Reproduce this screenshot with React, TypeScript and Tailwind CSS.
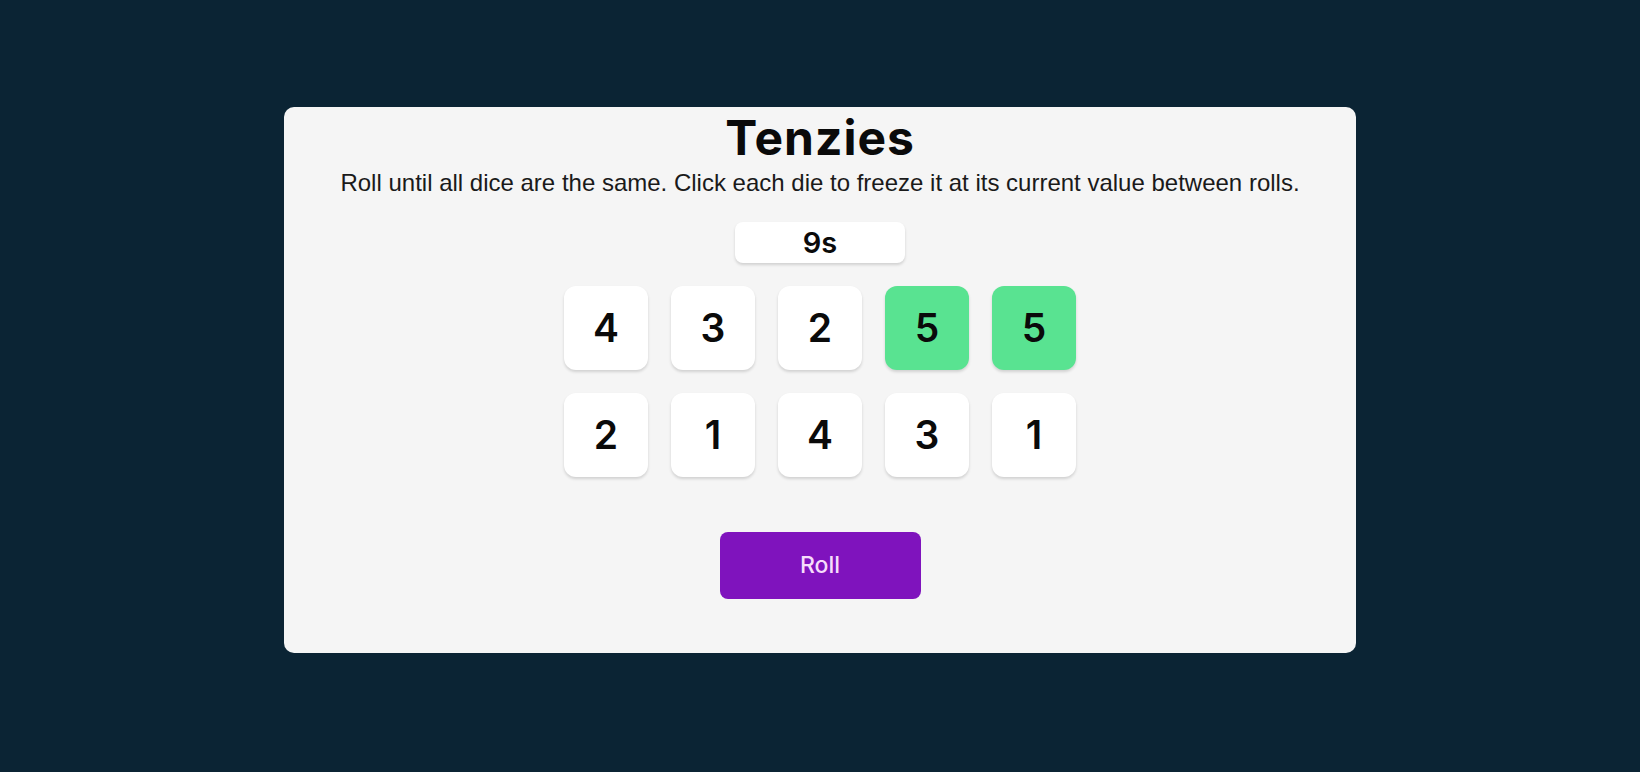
import { useState } from "react";

type Die = { value: number; held: boolean };

const initialDice: Die[] = [
  { value: 4, held: false },
  { value: 3, held: false },
  { value: 2, held: false },
  { value: 5, held: true },
  { value: 5, held: true },
  { value: 2, held: false },
  { value: 1, held: false },
  { value: 4, held: false },
  { value: 3, held: false },
  { value: 1, held: false },
];

export default function App() {
  const [dice, setDice] = useState<Die[]>(initialDice);

  function toggle(index: number) {
    setDice((prev) =>
      prev.map((d, i) => (i === index ? { ...d, held: !d.held } : d))
    );
  }

  function roll() {
    setDice((prev) =>
      prev.map((d) =>
        d.held ? d : { ...d, value: Math.ceil(Math.random() * 6) }
      )
    );
  }

  return (
    <main className="min-h-screen bg-[#0b2434] pt-[107px] font-['Inter',sans-serif]">
      <div className="mx-auto flex w-[1072px] flex-col items-center rounded-[10px] bg-[#f5f5f5] pt-[7px] pb-[54px]">
        <h1 className="text-[48px] leading-none font-bold tracking-[1px] text-[#0a0a0a]">
          Tenzies
        </h1>
        <p className="mt-[7px] font-['Liberation_Sans',Arial,sans-serif] text-[24px] leading-[28px] text-[#1a1a1a]">
          Roll until all dice are the same. Click each die to freeze it at its
          current value between rolls.
        </p>

        <div className="mt-[25px] flex h-[41px] w-[170px] items-center justify-center rounded-[8px] bg-white text-[29px] font-semibold text-[#0a0a0a] shadow-[0_2px_3px_rgba(0,0,0,0.15)]">
          9s
        </div>

        <div className="mt-[23px] grid grid-cols-5 gap-[23px]">
          {dice.map((die, i) => (
            <button
              key={i}
              onClick={() => toggle(i)}
              className={`flex h-[84px] w-[84px] items-center justify-center rounded-[12px] text-[39px] font-semibold text-[#0a0a0a] shadow-[0_2px_3px_rgba(0,0,0,0.15)] ${
                die.held ? "bg-[#59e391]" : "bg-white"
              }`}
            >
              {die.value}
            </button>
          ))}
        </div>

        <button
          onClick={roll}
          className="mt-[55px] h-[67px] w-[201px] rounded-[8px] bg-[#7f13bd] text-[23px] font-medium text-[#f6dcfb]"
        >
          Roll
        </button>
      </div>
    </main>
  );
}
